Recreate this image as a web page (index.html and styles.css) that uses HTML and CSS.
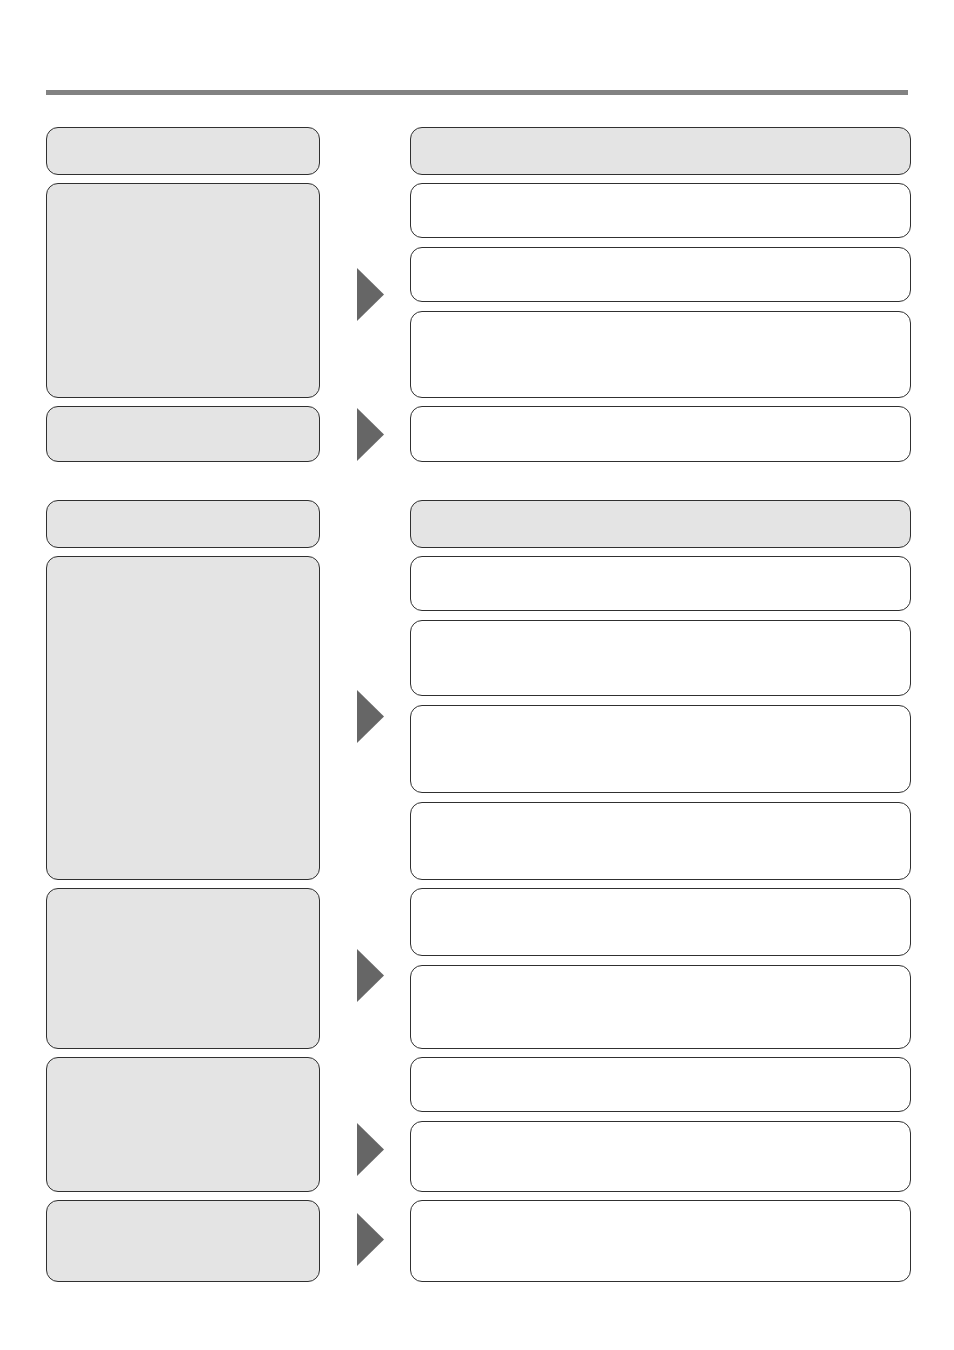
FILE: index.html
```html
<!DOCTYPE html>
<html lang="en">
<head>
<meta charset="utf-8">
<title>Flow chart</title>
<link rel="stylesheet" href="styles.css">
</head>
<body>
<div class="page">
  <div class="rule"></div>

  <section class="section section--first">
    <div class="row">
      <div class="box box--grey h48"></div>
      <div class="gutter"></div>
      <div class="box box--grey h48"></div>
    </div>
    <div class="row">
      <div class="box box--grey"></div>
      <div class="gutter"><svg class="arrow arrow--85" viewBox="0 0 27 53"><polygon points="0,0 27,26.5 0,53"/></svg></div>
      <div class="stack">
        <div class="box h55"></div>
        <div class="box h55"></div>
        <div class="box h87"></div>
      </div>
    </div>
    <div class="row">
      <div class="box box--grey h56"></div>
      <div class="gutter"><svg class="arrow arrow--2" viewBox="0 0 27 53"><polygon points="0,0 27,26.5 0,53"/></svg></div>
      <div class="box h56"></div>
    </div>
  </section>

  <section class="section section--second">
    <div class="row">
      <div class="box box--grey h48"></div>
      <div class="gutter"></div>
      <div class="box box--grey h48"></div>
    </div>
    <div class="row">
      <div class="box box--grey"></div>
      <div class="gutter"><svg class="arrow arrow--134" viewBox="0 0 27 53"><polygon points="0,0 27,26.5 0,53"/></svg></div>
      <div class="stack">
        <div class="box h55"></div>
        <div class="box h76"></div>
        <div class="box h88"></div>
        <div class="box h78"></div>
      </div>
    </div>
    <div class="row">
      <div class="box box--grey"></div>
      <div class="gutter"><svg class="arrow arrow--61" viewBox="0 0 27 53"><polygon points="0,0 27,26.5 0,53"/></svg></div>
      <div class="stack">
        <div class="box h68"></div>
        <div class="box h84"></div>
      </div>
    </div>
    <div class="row">
      <div class="box box--grey"></div>
      <div class="gutter"><svg class="arrow arrow--66" viewBox="0 0 27 53"><polygon points="0,0 27,26.5 0,53"/></svg></div>
      <div class="stack">
        <div class="box h55"></div>
        <div class="box h71"></div>
      </div>
    </div>
    <div class="row">
      <div class="box box--grey h82"></div>
      <div class="gutter"><svg class="arrow arrow--13" viewBox="0 0 27 53"><polygon points="0,0 27,26.5 0,53"/></svg></div>
      <div class="box h82"></div>
    </div>
  </section>
</div>
</body>
</html>
```

FILE: styles.css
```css
* { box-sizing: border-box; }

html, body {
  margin: 0;
  padding: 0;
  background: #ffffff;
  font-family: "Liberation Sans", Arial, sans-serif;
}

.page {
  width: 954px;
  height: 1350px;
  padding: 90px 0 0 46px;
}

.rule {
  width: 862px;
  height: 5px;
  background: #828282;
}

.section {
  display: flex;
  flex-direction: column;
  gap: 8px;
}

.section--first { margin-top: 32px; }
.section--second { margin-top: 38px; }

.row {
  display: grid;
  grid-template-columns: 274px 90px 501px;
  align-items: stretch;
}

.stack {
  display: flex;
  flex-direction: column;
  gap: 9px;
}

.box {
  border: 1px solid #303030;
  border-radius: 12px;
  background: #ffffff;
}

.box--grey { background: #e4e4e4; }

.gutter {
  position: relative;
}

.arrow {
  display: block;
  width: 27px;
  height: 53px;
  margin-left: 37px;
  fill: #666666;
}

.arrow--85 { margin-top: 85px; }
.arrow--2 { margin-top: 2px; }
.arrow--134 { margin-top: 134px; }
.arrow--61 { margin-top: 61px; }
.arrow--66 { margin-top: 66px; }
.arrow--13 { margin-top: 13px; }

.h48 { height: 48px; }
.h55 { height: 55px; }
.h56 { height: 56px; }
.h68 { height: 68px; }
.h71 { height: 71px; }
.h76 { height: 76px; }
.h78 { height: 78px; }
.h82 { height: 82px; }
.h84 { height: 84px; }
.h87 { height: 87px; }
.h88 { height: 88px; }
```
